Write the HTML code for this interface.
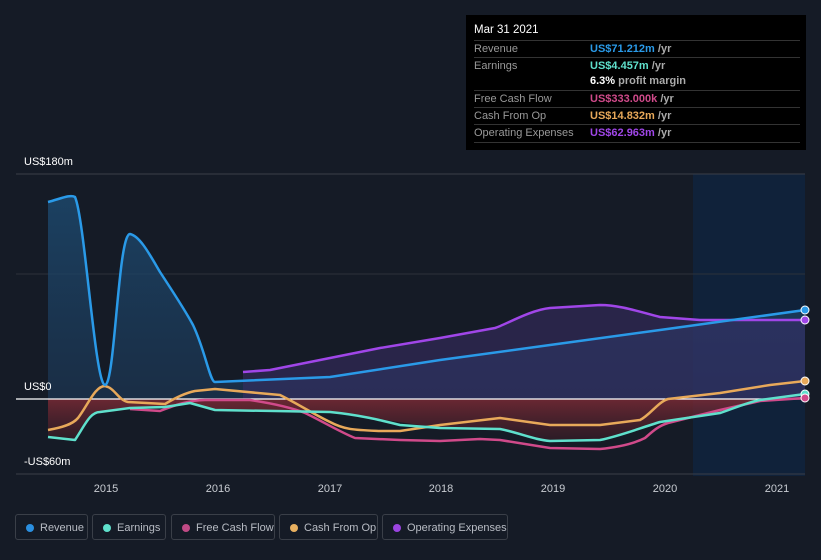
<!DOCTYPE html><html><head><style>
body{margin:0;width:821px;height:560px;background:#151b26;font-family:"Liberation Sans",sans-serif;overflow:hidden;position:relative}
.tt{position:absolute;left:466px;top:15px;width:340px;height:135px;background:#000;color:#fff;font-size:11px}
.tt .r{position:absolute;left:8px;width:326px;border-top:1px solid #333;height:16px;line-height:16px;color:#999}
.tt .v{position:absolute;left:116px;font-weight:bold}
.leg{position:absolute;top:514px;height:26px;border:1px solid #3a3f48;border-radius:3px;color:#b8bcc4;font-size:11px;line-height:26px;box-sizing:border-box;white-space:nowrap}
.leg i{position:absolute;left:10px;top:9px;width:8px;height:8px;border-radius:50%}
.leg span{position:absolute;left:24px}
.lab{position:absolute;color:#fff;font-size:11px}
</style></head><body>
<svg width="821" height="560" style="position:absolute;left:0;top:0">
<defs><linearGradient id="rg" x1="0" y1="0" x2="0" y2="1"><stop offset="0" stop-color="#1d4a70" stop-opacity=".8"/><stop offset="1" stop-color="#1d3a5a" stop-opacity=".6"/></linearGradient>
<linearGradient id="ng" x1="0" y1="0" x2="0" y2="1"><stop offset="0" stop-color="#7a2a35" stop-opacity=".85"/><stop offset="1" stop-color="#3a1c26" stop-opacity=".6"/></linearGradient></defs>
<rect x="693" y="174" width="112" height="302" fill="#0f2440" opacity=".8"/>
<line x1="16" y1="174" x2="805" y2="174" stroke="#3a3f48"/>
<line x1="16" y1="274" x2="805" y2="274" stroke="#2d323b"/>
<line x1="16" y1="474" x2="805" y2="474" stroke="#3a3f48"/>
<path d="M48,202 C60,199 70,194 75,197 C85,220 95,385 105,385 C115,385 118,234 130,234 C140,236 150,255 160,272 C175,295 185,310 193,325 C205,350 210,382 215,382 L330,377 L440,360 L550,345 L660,330 L805,310 L805,399 L48,399Z" fill="url(#rg)"/>
<path d="M243,372 L270,370 L310,362 L380,348 L440,338 L495,328 C505,325 530,310 550,308 L600,305 C620,305 640,312 660,317 L700,320 L805,320 L805,399 L243,399Z" fill="#3a2d66" opacity=".55"/>
<path d="M48,399 L48,437 L75,440 C85,425 90,412 100,412 L130,408 L165,407 L190,403 L215,410 L330,412 L440,428 L500,429 L550,441 L600,440 L660,422 L720,413 L760,400 L760,399Z" fill="url(#ng)"/>
<line x1="16" y1="399" x2="805" y2="399" stroke="#fff" stroke-width="1.2"/>
<g fill="none" stroke-width="2.5" stroke-linejoin="round">
<path d="M243,372 L270,370 L310,362 L380,348 L440,338 L495,328 C505,325 530,310 550,308 L600,305 C620,305 640,312 660,317 L700,320 L805,320" stroke="#a046e8"/>
<path d="M48,430 C60,428 72,425 78,418 C88,405 95,386 105,386 C115,388 118,400 128,402 L165,404 C175,398 185,393 195,391 L215,389 L280,395 C300,405 315,415 330,422 C345,430 355,430 380,431 L400,431 L440,425 L500,418 L550,425 L600,425 L640,420 C650,415 658,402 668,399 L720,393 L770,385 L805,381" stroke="#e8a95a"/>
<path d="M130,409 L160,411 C175,405 190,400 205,400 L250,400 C270,403 290,407 305,413 C320,420 340,432 355,438 L400,440 L440,441 L480,439 L500,440 L550,448 L600,449 C620,447 635,443 645,438 C652,432 658,426 668,423 L720,410 L760,401 L805,398" stroke="#d04a8a"/>
<path d="M48,437 L75,440 C85,425 90,412 100,412 L130,408 L165,407 L190,403 L215,410 L330,412 C360,415 380,420 400,425 L440,428 L500,429 C520,433 535,440 550,441 L600,440 C620,436 640,428 660,422 L720,413 C730,410 745,403 760,400 L805,394" stroke="#5fe0cc"/>
<path d="M48,202 C60,199 70,194 75,197 C85,220 95,385 105,385 C115,385 118,234 130,234 C140,236 150,255 160,272 C175,295 185,310 193,325 C205,350 210,382 215,382 L330,377 L440,360 L550,345 L660,330 L805,310" stroke="#2a9ae8"/>
</g>
<circle cx="805" cy="310" r="4" fill="#2a9ae8" stroke="#fff"/><circle cx="805" cy="320" r="4" fill="#a046e8" stroke="#fff"/>
<circle cx="805" cy="381" r="4" fill="#e8a95a" stroke="#fff"/><circle cx="805" cy="394" r="4" fill="#5fe0cc" stroke="#fff"/><circle cx="805" cy="398" r="4" fill="#d04a8a" stroke="#fff"/>
<g fill="#c8ccd2" font-size="11" font-family="Liberation Sans" text-anchor="middle"><text x="106" y="492">2015</text><text x="218" y="492">2016</text><text x="330" y="492">2017</text><text x="441" y="492">2018</text><text x="553" y="492">2019</text><text x="665" y="492">2020</text><text x="777" y="492">2021</text></g>
</svg>
<div class="lab" style="left:24px;top:156px">US$180m</div>
<div class="lab" style="left:24px;top:381px">US$0</div>
<div class="lab" style="left:24px;top:456px">-US$60m</div>
<div class="tt">
<div style="position:absolute;left:8px;top:9px;font-size:11.5px">Mar 31 2021</div>
<div class="r" style="top:25px">Revenue<span class="v" style="color:#2a9ae8">US$71.212m <b style="color:#aaa">/yr</b></span></div>
<div class="r" style="top:42px">Earnings<span class="v" style="color:#5fe0cc">US$4.457m <b style="color:#aaa">/yr</b></span></div>
<div class="r" style="top:58px;border:0"><span class="v" style="color:#fff">6.3% <b style="color:#aaa">profit margin</b></span></div>
<div class="r" style="top:75px">Free Cash Flow<span class="v" style="color:#d04a8a">US$333.000k <b style="color:#aaa">/yr</b></span></div>
<div class="r" style="top:92px">Cash From Op<span class="v" style="color:#e8a95a">US$14.832m <b style="color:#aaa">/yr</b></span></div>
<div class="r" style="top:109px">Operating Expenses<span class="v" style="color:#a046e8">US$62.963m <b style="color:#aaa">/yr</b></span></div>
<div style="position:absolute;left:8px;top:127px;width:326px;border-top:1px solid #333"></div>
</div>
<div class="leg" style="left:15px;width:73px"><i style="background:#2a8fe0"></i><span>Revenue</span></div>
<div class="leg" style="left:92px;width:74px"><i style="background:#5fe0cc"></i><span>Earnings</span></div>
<div class="leg" style="left:171px;width:104px"><i style="background:#c04a85"></i><span>Free Cash Flow</span></div>
<div class="leg" style="left:279px;width:99px"><i style="background:#e8b060"></i><span>Cash From Op</span></div>
<div class="leg" style="left:382px;width:126px"><i style="background:#9a44e0"></i><span>Operating Expenses</span></div>
</body></html>
